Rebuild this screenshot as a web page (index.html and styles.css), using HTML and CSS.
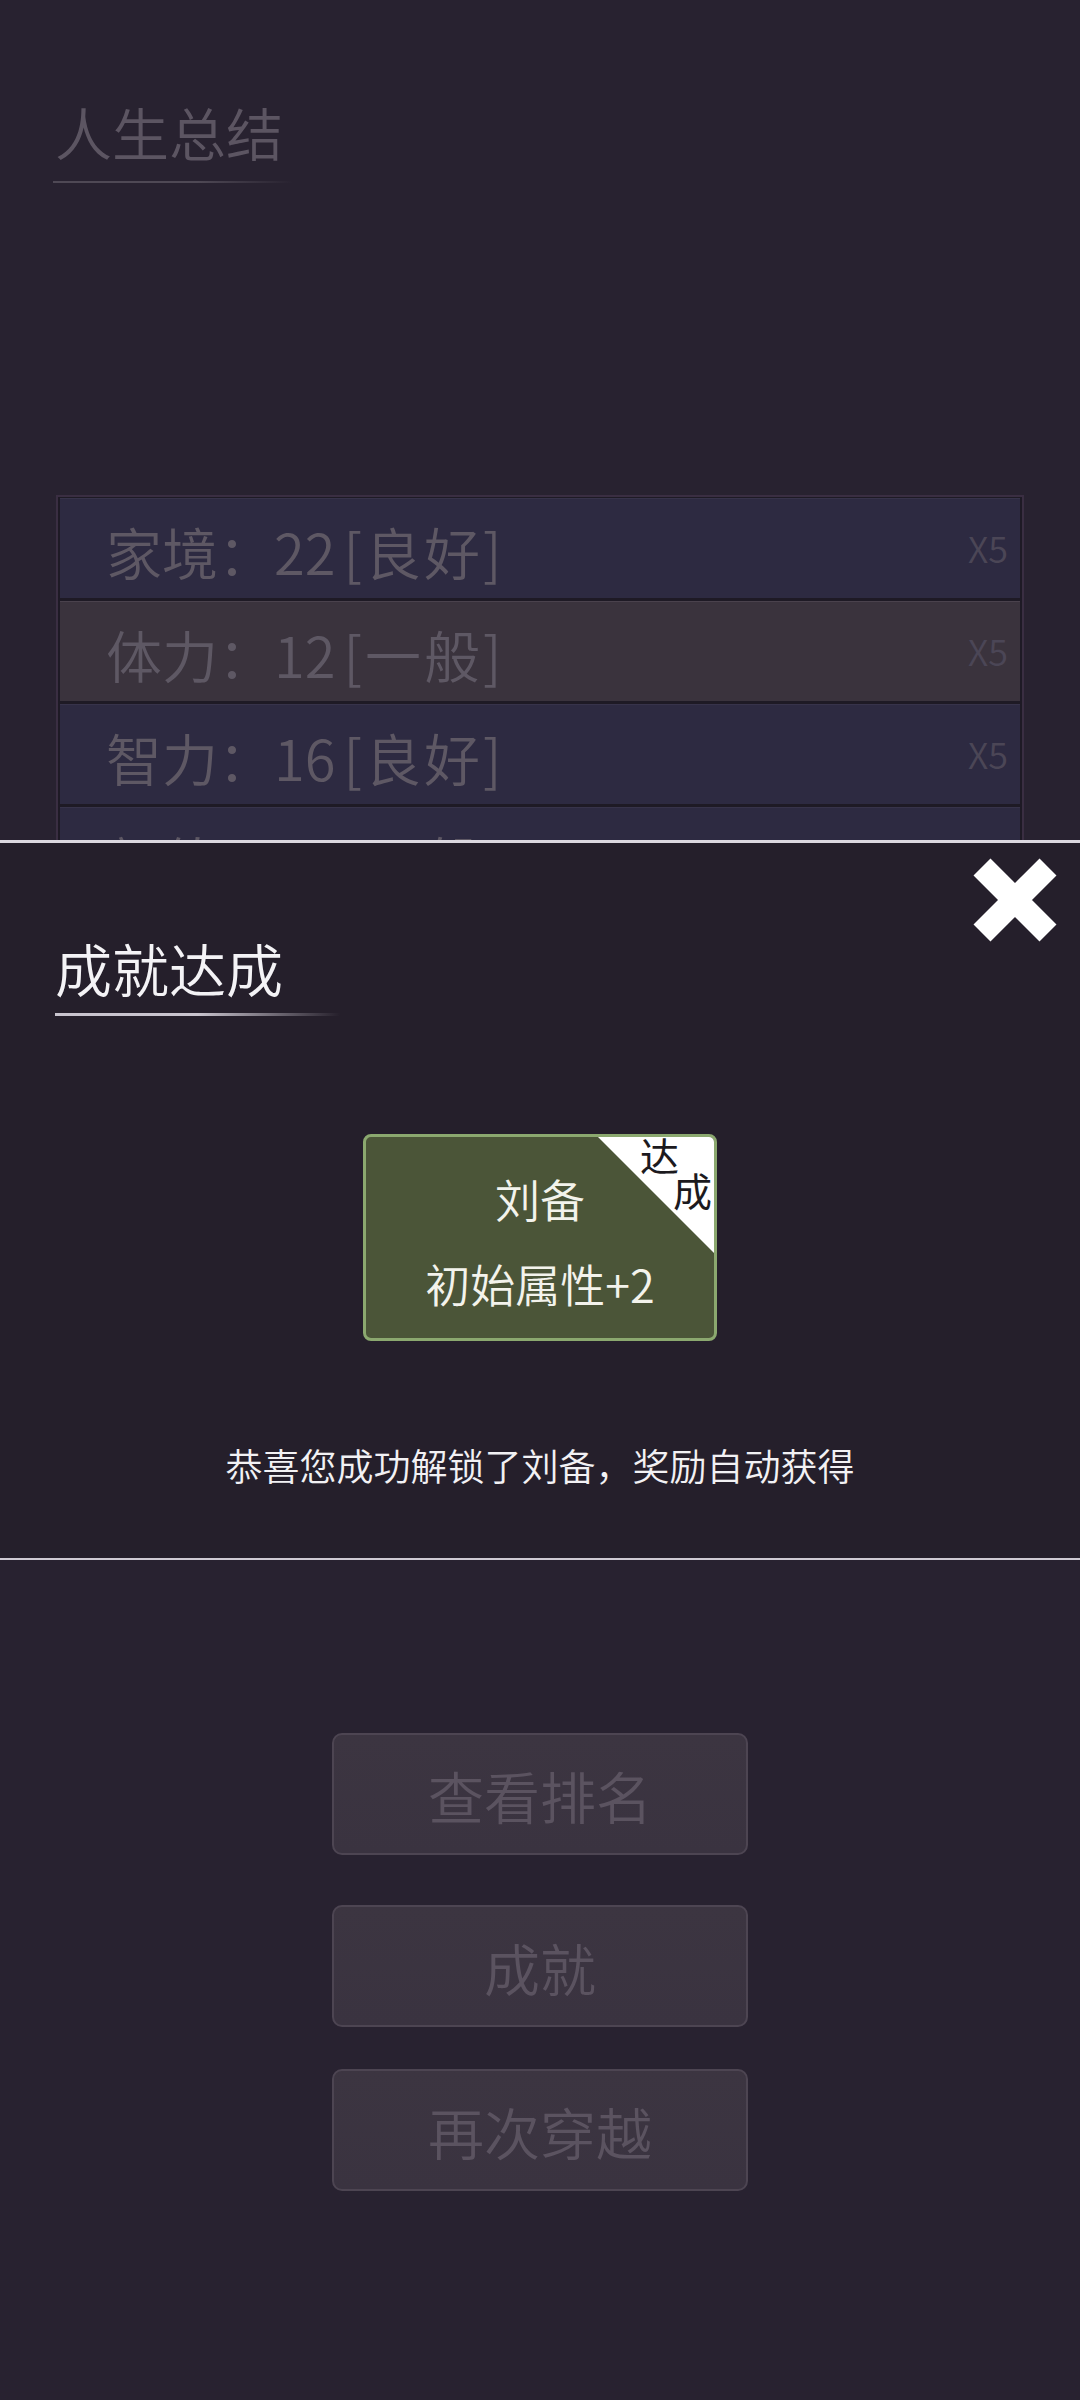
FILE: index.html
```html
<!DOCTYPE html>
<html>
<head>
    <meta charset="utf-8">
    <link rel="stylesheet" href="styles.css">
</head>
<body>
    <!-- Life summary page (dimmed behind the popup) -->
    <div class="summary">
        <h2 class="section-title">人生总结</h2>
        <div class="title-line"></div>

        <div class="stats">
            <div class="stat-row">
                <div class="stat-label">家境：22<span class="grade">[良好]</span></div>
                <div class="stat-mult">X5</div>
            </div>
            <div class="stat-row alt">
                <div class="stat-label">体力：12<span class="grade">[一般]</span></div>
                <div class="stat-mult">X5</div>
            </div>
            <div class="stat-row">
                <div class="stat-label">智力：16<span class="grade">[良好]</span></div>
                <div class="stat-mult">X5</div>
            </div>
            <div class="stat-row">
                <div class="stat-label">颜值：10<span class="grade">[一般]</span></div>
                <div class="stat-mult">X5</div>
            </div>
        </div>

        <div class="actions">
            <button class="action-btn first">查看排名</button>
            <button class="action-btn">成就</button>
            <button class="action-btn">再次穿越</button>
        </div>
    </div>

    <!-- Achievement popup -->
    <div class="modal">
        <button class="close-btn" aria-label="关闭">
            <svg width="84" height="84" viewBox="0 0 84 84">
                <path d="M9 9 L75 75 M75 9 L9 75" stroke="#ffffff" stroke-width="24" fill="none"/>
            </svg>
        </button>
        <h2 class="modal-title">成就达成</h2>
        <div class="modal-line"></div>

        <div class="achieve-card">
            <div class="badge">
                <span class="badge-a">达</span>
                <span class="badge-b">成</span>
            </div>
            <div class="achieve-name">刘备</div>
            <div class="achieve-reward">初始属性+2</div>
        </div>

        <p class="modal-msg">恭喜您成功解锁了刘备，奖励自动获得</p>
    </div>
</body>
</html>
```

FILE: styles.css
```css
body {
    margin: 0;
    width: 1080px;
    height: 2400px;
    background: #282230;
    font-family: "Noto Sans CJK SC", "Noto Sans", sans-serif;
    font-weight: 350;
    position: relative;
    overflow: hidden;
}
.summary {
    padding-top: 103px;
}
.section-title {
    margin: 0 0 0 55px;
    font-size: 57px;
    line-height: 56px;
    font-weight: 350;
    color: #5c5562;
}
.title-line {
    margin: 22px 0 0 53px;
    width: 240px;
    height: 2px;
    background: linear-gradient(90deg, #4f4955 60%, rgba(79,73,85,0));
}
.stats {
    margin: 312px 56px 0;
    border: 2px solid #3a2e42;
    padding: 1px 2px;
    background: #1e1a25;
    display: flex;
    flex-direction: column;
    gap: 3px;
}
.stat-row {
    height: 100px;
    box-sizing: border-box;
    padding: 4px 12px 0 46px;
    display: flex;
    align-items: center;
    justify-content: space-between;
    background: #2d2a41;
    border-top: 1px solid #37334a;
}
.stat-row.alt {
    background: #3a333d;
    border-top: 1px solid #4a424d;
}
.stat-label {
    font-size: 56px;
    color: #5e5864;
}
.grade {
    margin-left: 8px;
    letter-spacing: 3px;
}
.stat-mult {
    font-size: 36px;
    color: #4b4656;
    margin-top: -8px;
}
.actions {
    margin-top: 823px;
    display: flex;
    flex-direction: column;
    align-items: center;
    gap: 42px;
}
.action-btn {
    width: 416px;
    height: 122px;
    background: linear-gradient(180deg, #3c3541, #3a3340);
    border: 2px solid #4d4552;
    border-radius: 10px;
    color: #5b5360;
    font-family: inherit;
    font-weight: 350;
    font-size: 56px;
    padding: 0;
}
.action-btn.first {
    margin-bottom: 8px;
}

/* popup */
.modal {
    position: absolute;
    top: 840px;
    left: 0;
    right: 0;
    height: 715px;
    background: #251f2b;
    border-top: 3px solid #dcd8e0;
    border-bottom: 2px solid #cfcad4;
    display: flex;
    flex-direction: column;
    align-items: center;
}
.close-btn {
    position: absolute;
    top: 15px;
    right: 23px;
    background: none;
    border: none;
    padding: 0;
    width: 84px;
    height: 84px;
}
.modal-title {
    align-self: flex-start;
    margin: 96px 0 0 55px;
    font-size: 57px;
    line-height: 56px;
    font-weight: 350;
    color: #f4f3f6;
}
.modal-line {
    align-self: flex-start;
    margin: 18px 0 0 55px;
    width: 285px;
    height: 3px;
    background: linear-gradient(90deg, #c9c4ce 50%, rgba(201,196,206,0));
}
.achieve-card {
    position: relative;
    margin-top: 118px;
    width: 354px;
    height: 207px;
    box-sizing: border-box;
    padding-top: 37px;
    background: #4b5538;
    border: 3px solid #8ba86f;
    border-radius: 8px;
    overflow: hidden;
    display: flex;
    flex-direction: column;
    align-items: center;
    gap: 35px;
    color: #f3f3ec;
}
.achieve-name,
.achieve-reward {
    font-size: 45px;
    line-height: 50px;
}
.badge {
    position: absolute;
    top: 0;
    right: 0;
    width: 116px;
    height: 116px;
    background: #ffffff;
    clip-path: polygon(0 0, 100% 0, 100% 100%);
    color: #1c1a1e;
    font-size: 39px;
    font-weight: 400;
    line-height: 35px;
}
.badge span {
    display: block;
}
.badge-a {
    margin-left: 42px;
}
.badge-b {
    margin-left: 75px;
}
.modal-msg {
    margin: 99px 0 0;
    font-size: 37px;
    line-height: 50px;
    color: #f2f1f4;
}
```
